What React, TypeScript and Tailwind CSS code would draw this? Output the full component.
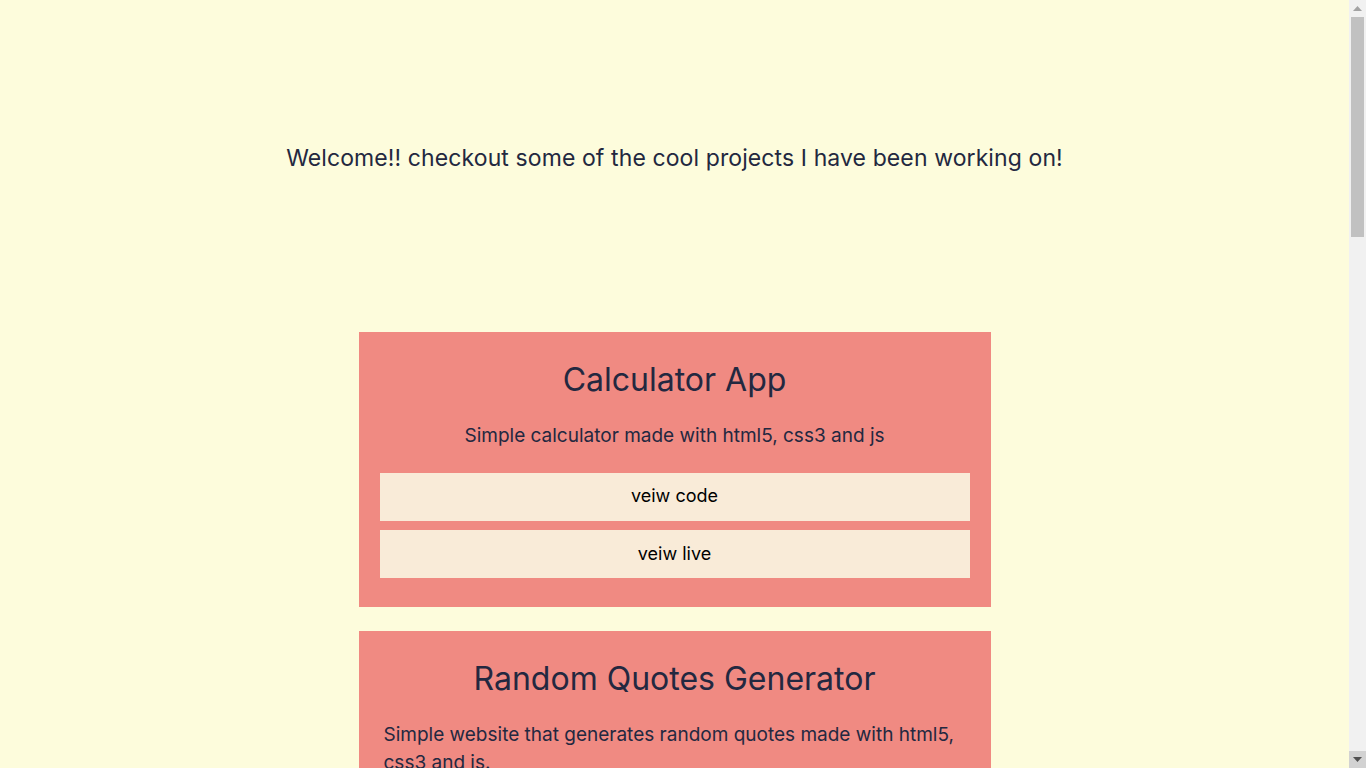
import React from "react";

type Project = { title: string; desc: string };

const projects: Project[] = [
  { title: "Calculator App", desc: "Simple calculator made with html5, css3 and js" },
  { title: "Random Quotes Generator", desc: "Simple website that generates random quotes made with html5, css3 and js." },
  { title: "Todo List App", desc: "Simple todo list app made with html5, css3 and js" },
  { title: "Weather App", desc: "Simple weather app made with html5, css3 and js" },
  { title: "Tic Tac Toe", desc: "Simple tic tac toe game made with html5, css3 and js" },
  { title: "Landing Page", desc: "Simple landing page made with html5 and css3" },
  { title: "Portfolio Website", desc: "Simple portfolio website made with html5, css3 and js" },
];

function Card({ p }: { p: Project }) {
  return (
    <div className="w-[632px] bg-[#f08a82] px-[21px] pt-[28px] pb-[29px] text-center">
      <h2 className="text-[32px] leading-[40px] text-[#232840]">{p.title}</h2>
      <div className="mt-[22px]">
        <p className="inline-block px-[4px] text-left text-[19px] leading-[28px] text-[#232840]">{p.desc}</p>
      </div>
      <div className="mt-[23px] flex flex-col gap-[9px]">
        <button className="h-[48px] w-full bg-[#f9ebd8] pb-[3px] text-[18px] text-black">veiw code</button>
        <button className="h-[48px] w-full bg-[#f9ebd8] pb-[2px] text-[18px] text-black">veiw live</button>
      </div>
    </div>
  );
}

function FakeScrollbar() {
  return (
    <div className="fixed right-0 top-0 flex h-screen w-[17px] flex-col bg-[#f1f1f1]">
      <div className="flex h-[17px] items-center justify-center">
        <svg width="9" height="5" viewBox="0 0 9 5">
          <path d="M4.5 0 L9 5 L0 5 Z" fill="#a3a3a3" />
        </svg>
      </div>
      <div className="flex-1 px-[2px]">
        <div className="h-[220px] w-full bg-[#c1c1c1]" />
      </div>
      <div className="flex h-[17px] items-center justify-center bg-[#d2d2d2]">
        <svg width="9" height="5" viewBox="0 0 9 5">
          <path d="M0 0 L9 0 L4.5 5 Z" fill="#505050" />
        </svg>
      </div>
    </div>
  );
}

export default function App() {
  return (
    <div
      className="min-h-screen bg-[#fdfcdc] pb-[60px] pr-[17px]"
      style={{ fontFamily: "Inter, 'Open Sans', sans-serif" }}
    >
      <header className="pt-[142px] pb-[158px] text-center">
        <h1 className="text-[23px] leading-[32px] tracking-[0.1px] text-[#232840]">
          Welcome!! checkout some of the cool projects I have been working on!
        </h1>
      </header>
      <main className="flex flex-col items-center gap-[24px]">
        {projects.map((p) => (
          <Card key={p.title} p={p} />
        ))}
      </main>
      <FakeScrollbar />
    </div>
  );
}
